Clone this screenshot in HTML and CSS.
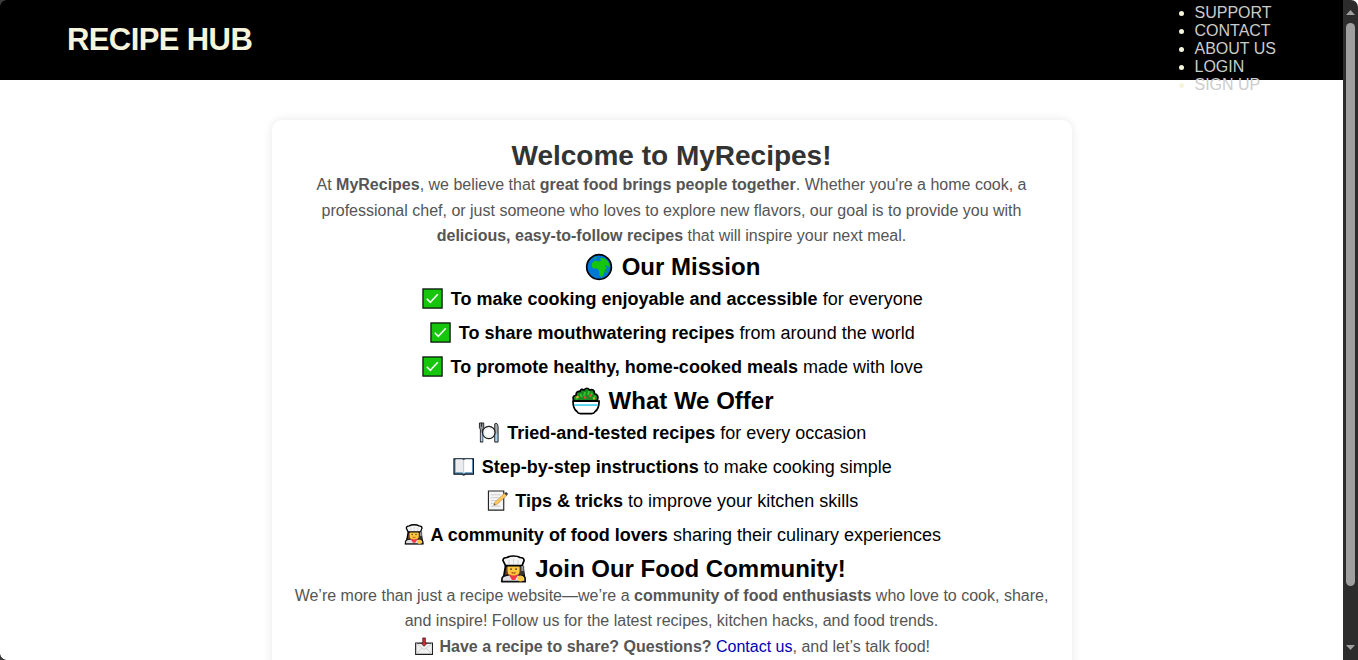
FILE: index.html
```html
<!DOCTYPE html>
<html lang="en">
<head>
<meta charset="utf-8">
<title>Recipe Hub</title>
<link rel="stylesheet" href="styles.css">
</head>
<body>
<svg class="defs" aria-hidden="true">
  <symbol id="check" viewBox="0 0 22 22">
    <rect x="1" y="1" width="20" height="20" fill="#16c60c" stroke="#061006" stroke-width="1.3"/>
    <path d="M5 11.200l3.700 3.700 7.800-8.400" fill="none" stroke="#f4fff2" stroke-width="1.700"/>
  </symbol>
  <symbol id="chef" viewBox="0 0 28 28">
    <path d="M5.500 11L4 20l-2 6h23l-1-6-1.500-9z" fill="#6b3f20" stroke="#000" stroke-width="1.800"/>
    <path d="M2 26.500V23q1-2 6-3h11q5 0 6 3v3.500z" fill="#e3e3e7" stroke="#111" stroke-width="1.600"/>
    <path d="M7.500 10v6q0 5.500 6 5.500t6-5.500v-6z" fill="#ffc83d"/>
    <path d="M8.500 19.500h10L15 25h-3z" fill="#f03a47"/>
    <path d="M8 15q1 5.500 5.500 5.500T19 15z" fill="#ffc83d"/>
    <path d="M5.500 10.500L3 5.500q0-3 4-3Q9 1 13.500 1T20 2.500q4 0 4 3L22 10.500z" fill="#f4f4f4" stroke="#000" stroke-width="1.700"/>
    <path d="M9 5v4m4.500-5v5M18 5v4" stroke="#d4d4d4"/>
    <circle cx="11" cy="14" r=".9" fill="#433"/><circle cx="16" cy="14" r=".9" fill="#433"/>
    <path d="M11.500 17.500q2 1 4 0" fill="none" stroke="#a5480b"/>
    <path d="M22.300 11v9" stroke="#333" stroke-width="3.600"/><path d="M22.300 11v5" stroke="#999" stroke-width="2"/>
    <circle cx="20.500" cy="23.500" r="3" fill="#ffc83d"/>
  </symbol>
</svg>
<div class="page">
  <header class="header">
    <div class="logo">RECIPE HUB</div>
    <ul class="nav">
      <li><a>SUPPORT</a></li>
      <li><a>CONTACT</a></li>
      <li><a>ABOUT US</a></li>
      <li><a>LOGIN</a></li>
      <li><a>SIGN UP</a></li>
    </ul>
  </header>
  <main class="card">
    <h1>Welcome to MyRecipes!</h1>
    <p class="intro">At <strong>MyRecipes</strong>, we believe that <strong>great food brings people together</strong>. Whether you're a home cook, a professional chef, or just someone who loves to explore new flavors, our goal is to provide you with <strong>delicious, easy-to-follow recipes</strong> that will inspire your next meal.</p>
    <h2><svg class="emoji" viewBox="0 0 28 28"><circle cx="14" cy="14" r="12.300" fill="#0078d7" stroke="#000" stroke-width="1.700"/><path d="M7 10l3-2.500 4 1 2-1-1-2.500h3q5 1.500 6 6l.5 3-2-.5-1.500-1.500-1 1 2 2.500-2 1-1 4-2.500 4-2-2-.5-5-2-2H8l-1.500-2z" fill="#16c60c"/><path d="M8 6l4-2.500-1 2zM21 19l1-2v3z" fill="#16c60c"/></svg> Our Mission</h2>
    <ul class="list">
      <li><svg class="emoji"><use href="#check"/></svg> <strong>To make cooking enjoyable and accessible</strong> for everyone</li>
      <li><svg class="emoji"><use href="#check"/></svg> <strong>To share mouthwatering recipes</strong> from around the world</li>
      <li><svg class="emoji"><use href="#check"/></svg> <strong>To promote healthy, home-cooked meals</strong> made with love</li>
    </ul>
    <h2><svg class="emoji" viewBox="0 0 28 28"><path d="M2 14Q-.5 9 4 8q0-4 4-3.500Q9 1 12 3q3-3.500 5.500 0 5-1.500 5 3.500 5 1.500 2.500 7.500z" fill="#198a20" stroke="#000" stroke-width="1.700"/><path d="M4 12l2-2m2-3l2 3m3-5l-1 4m5-5l-1 4m4-2l-2 4m5-1l-2 3" fill="none" stroke="#35c52b" stroke-width="1.800"/><circle cx="5.500" cy="10" r="1.300" fill="#f7a928"/><circle cx="13" cy="10.500" r="1.300" fill="#e8433f"/><circle cx="18.500" cy="8.500" r="1.300" fill="#e8433f"/><circle cx="22" cy="11.500" r="1" fill="#f7a928"/><path d="M1 14h26q0 8-4 10.500-1 2-3.500 2h-11q-2.500 0-3.500-2Q1 22 1 14z" fill="#fff" stroke="#000" stroke-width="1.700"/><path d="M2 18h24" stroke="#50d4ef" stroke-width="1.800"/></svg> What We Offer</h2>
    <ul class="list">
      <li><svg class="emoji" viewBox="0 0 22 22"><path d="M1.500 1v5l1 2v13H5V8l1-2V1z" fill="#8e969b" stroke="#222"/><path d="M3.800 11v9" stroke="#a2d5f5" stroke-width="1.700"/><path d="M3.700 1v4" stroke="#222"/><path d="M17.500 21V2q3-2 3.500 3v16z" fill="#a9aeb1" stroke="#222"/><path d="M19.200 12v8" stroke="#a2d5f5" stroke-width="1.700"/><circle cx="11.300" cy="11" r="6.500" fill="#fff" stroke="#1b1b1b" stroke-width="1.300"/><circle cx="11.300" cy="11" r="4.500" fill="#fff" stroke="#ddd" stroke-width=".6"/></svg> <strong>Tried-and-tested recipes</strong> for every occasion</li>
      <li><svg class="emoji" viewBox="0 0 22 22"><path d="M1 3h20.500v16h-8.500l-1.700 1-1.800-1H1z" fill="#5a91b8" stroke="#0b1620" stroke-width="1.200"/><path d="M2.700 3.500h6.800l1.700 1v13.500l-1.700-1H2.700z" fill="#ececef"/><path d="M19.800 3.500h-6.800l-1.800 1v13.500l1.800-1h6.800z" fill="#fff"/><path d="M11.200 4v14" stroke="#bbb" stroke-width=".6"/></svg> <strong>Step-by-step instructions</strong> to make cooking simple</li>
      <li><svg class="emoji" viewBox="0 0 22 22"><path d="M1.500 1h16v20h-16z" fill="#f5f5f5" stroke="#242424" stroke-width="1.200"/><path d="M4 5h10M4 8h8M4 11h6M4 14h4M4 17h10" stroke="#c4c4c4" stroke-width=".8"/><path d="M7 16l1-3L18.500 3l2.500 2.500L10 15.500z" fill="#ffc65c" stroke="#9b7a45" stroke-width=".5"/><path d="M18 3.500l2-1.500 2 2-1.500 2z" fill="#383c48"/><path d="M7 16l1-2 1 1z" fill="#333"/></svg> <strong>Tips &amp; tricks</strong> to improve your kitchen skills</li>
      <li><svg class="emoji emoji-chef"><use href="#chef"/></svg> <strong>A community of food lovers</strong> sharing their culinary experiences</li>
    </ul>
    <h2><svg class="emoji emoji-chef"><use href="#chef"/></svg> Join Our Food Community!</h2>
    <p class="join">We’re more than just a recipe website—we’re a <strong>community of food enthusiasts</strong> who love to cook, share, and inspire! Follow us for the latest recipes, kitchen hacks, and food trends.</p>
    <p><svg class="emoji" viewBox="0 0 20 20"><path d="M.7 6.500h18v12H.7z" fill="#f0f0f0" stroke="#1e1e1e" stroke-width="1.200"/><path d="M1.500 7l8.200 6.500L18 7M1.500 18l6-6M18 18l-6-6" fill="none" stroke="#ccc"/><path d="M8.300 1h2.800v5.500h2L9.700 10 6.300 6.500h2z" fill="#d42d35" stroke="#43151a" stroke-width=".8"/></svg> <strong>Have a recipe to share? Questions?</strong> <a class="link">Contact us</a>, and let’s talk food!</p>
  </main>
</div>
<div class="scrollbar">
  <svg class="arrow" viewBox="0 0 9 5"><path d="M0 5L4.500 0 9 5z"/></svg>
  <div class="thumb"></div>
  <svg class="arrow arrow-down" viewBox="0 0 9 5"><path d="M0 0h9L4.500 5z"/></svg>
</div>
<div class="corner corner-tl"></div>
<div class="corner corner-bl"></div>
</body>
</html>
```
FILE: styles.css
```css
* { margin: 0; padding: 0; box-sizing: border-box; }
body {
  display: flex;
  height: 660px;
  overflow: hidden;
  background: #fff;
  font-family: "Liberation Sans", Arial, sans-serif;
}
.defs { position: absolute; width: 0; height: 0; }
.page { width: 1343px; height: 660px; overflow: hidden; }
.header {
  display: flex;
  justify-content: space-between;
  align-items: center;
  height: 80px;
  padding: 0 67px;
  background: #000;
  color: beige;
}
.logo { padding-bottom: 1px; font-size: 31px; font-weight: bold; line-height: 34px; letter-spacing: -0.6px; }
.nav { height: 72px; font-size: 16px; line-height: 18px; }
.nav a { color: #ccc; }
.card {
  width: 800px;
  margin: 40px auto;
  padding: 20px;
  border-radius: 10px;
  background: #fff;
  box-shadow: 0 0 10px rgba(0, 0, 0, 0.1);
  text-align: center;
}
h1 { font-size: 28px; line-height: 32px; color: #333; }
h2 { padding-top: 1px; margin-bottom: -1px; font-size: 24px; line-height: 32px; }
p { font-size: 16px; line-height: 25.6px; color: #555; }
.intro { margin-bottom: 1.4px; }
.list { list-style: none; font-size: 18px; line-height: 34px; }
.list + h2:last-of-type { margin-bottom: -2.6px; }
.link { color: #0000b8; }
.emoji {
  width: 1.17em;
  height: 1.17em;
  margin: 0 0.08em 0 0.1em;
  vertical-align: -0.26em;
}
.list .emoji { margin-right: 0.15em; vertical-align: -0.21em; }
p .emoji { margin-right: 0.11em; vertical-align: -0.22em; }
.list .emoji-chef, h2 .emoji-chef { margin-right: 0.04em; }
.scrollbar {
  display: flex;
  flex-direction: column;
  align-items: center;
  width: 15px;
  height: 660px;
  padding: 10px 0;
  background: #2c2c2c;
  border-top-right-radius: 7px;
}
.arrow { width: 9px; height: 5px; fill: #9f9f9f; }
.thumb { width: 9px; height: 563px; margin-top: 8px; border-radius: 5px; background: #9f9f9f; }
.arrow-down { margin-top: auto; }
.corner { position: absolute; left: 0; width: 7px; height: 7px; }
.corner-tl { top: 0; background: radial-gradient(circle at 7px 7px, transparent 6.5px, #3a3a3a 7.2px); }
.corner-bl { bottom: 0; background: radial-gradient(circle at 7px 0, transparent 6.5px, #3a3a3a 7.2px); }
```
